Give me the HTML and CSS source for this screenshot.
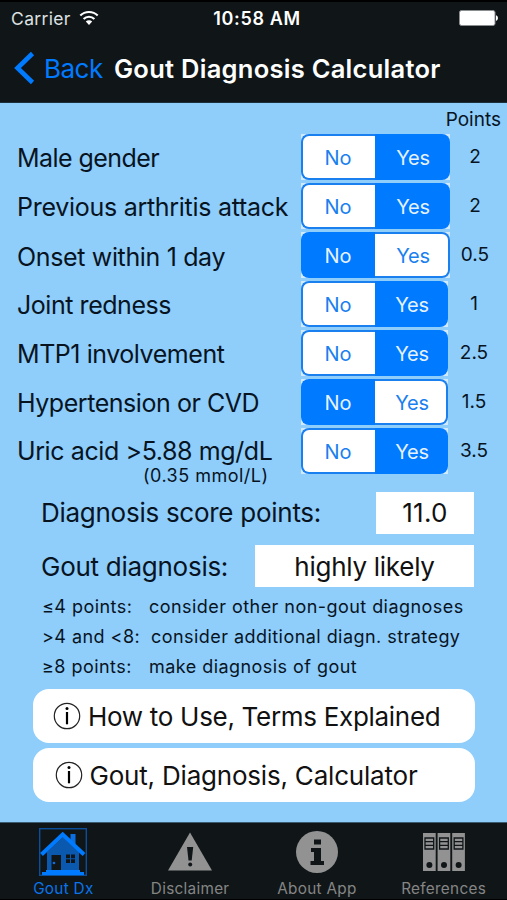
FILE: index.html
```html
<!DOCTYPE html>
<html lang="en">
<head>
    <meta charset="UTF-8">
    <meta name="viewport" content="width=device-width, initial-scale=1.0">
    <title>Gout Diagnosis Calculator</title>
    <link rel="stylesheet" href="styles.css">
</head>
<body>
<div class="app">
    <header class="header">
        <div class="status-bar">
            <div class="carrier">
                <span>Carrier</span>
                <svg class="wifi" viewBox="0 0 20 16" width="20" height="16">
                    <path d="M1.3 5.6a12.4 12.4 0 0 1 17.4 0" fill="none" stroke="#fff" stroke-width="2.1"/>
                    <path d="M4.6 9a7.7 7.7 0 0 1 10.8 0" fill="none" stroke="#fff" stroke-width="2.1"/>
                    <path d="M10 15l-3.2-3.4a4.6 4.6 0 0 1 6.4 0z" fill="#fff"/>
                </svg>
            </div>
            <span class="time">10:58 AM</span>
            <div class="battery-wrap">
                <svg viewBox="0 0 40 16" width="40" height="16">
                    <rect x="0.5" y="0.5" width="35.5" height="15" rx="2" fill="#fff" stroke="#8b8e90"/>
                    <path d="M37 5.2C39.6 6 39.6 10 37 10.8z" fill="#fff"/>
                </svg>
            </div>
        </div>
        <div class="nav-bar">
            <a class="back">
                <svg viewBox="0 0 21 34" width="21" height="34">
                    <path d="M18.5 2.5L3.5 17l15 14.5" fill="none" stroke="#007aff" stroke-width="4.6"/>
                </svg>
                <span>Back</span>
            </a>
            <h1>Gout Diagnosis Calculator</h1>
        </div>
    </header>

    <main class="content">
        <div class="points-title">Points</div>
        <div class="question wide">
            <span class="label male">Male gender</span>
            <div class="segment"><button>No</button><button class="on">Yes</button></div>
            <span class="points">2</span>
        </div>
        <div class="question wide">
            <span class="label previous">Previous arthritis attack</span>
            <div class="segment"><button>No</button><button class="on">Yes</button></div>
            <span class="points">2</span>
        </div>
        <div class="question wide">
            <span class="label onset">Onset within 1 day</span>
            <div class="segment"><button class="on">No</button><button>Yes</button></div>
            <span class="points">0.5</span>
        </div>
        <div class="question">
            <span class="label">Joint redness</span>
            <div class="segment"><button>No</button><button class="on">Yes</button></div>
            <span class="points">1</span>
        </div>
        <div class="question">
            <span class="label">MTP1 involvement</span>
            <div class="segment"><button>No</button><button class="on">Yes</button></div>
            <span class="points">2.5</span>
        </div>
        <div class="question">
            <span class="label">Hypertension or CVD</span>
            <div class="segment"><button class="on">No</button><button>Yes</button></div>
            <span class="points">1.5</span>
        </div>
        <div class="question">
            <span class="label uric">Uric acid &gt;5.88 mg/dL</span>
            <div class="segment"><button>No</button><button class="on">Yes</button></div>
            <span class="points">3.5</span>
        </div>
        <div class="unit-note">(0.35 mmol/L)</div>

        <div class="result score">
            <span class="result-label">Diagnosis score points:</span>
            <output>11.0</output>
        </div>
        <div class="result verdict">
            <span class="result-label">Gout diagnosis:</span>
            <output>highly likely</output>
        </div>

        <div class="legend">
            <p><span class="range">≤4 points:</span><span>consider other non-gout diagnoses</span></p>
            <p><span class="range between">&gt;4 and &lt;8:</span><span>consider additional diagn. strategy</span></p>
            <p><span class="range">≥8 points:</span><span>make diagnosis of gout</span></p>
        </div>

        <div class="links">
            <button class="link-button">
                <svg viewBox="0 0 28 28" width="28" height="28">
                    <circle cx="14" cy="14" r="12.7" fill="none" stroke="#222" stroke-width="1.2"/>
                    <path d="M14 10v12.3" stroke="#000" stroke-width="2.2"/>
                    <circle cx="14" cy="6.6" r="1.5"/>
                </svg>
                <span>How to Use, Terms Explained</span>
            </button>
            <button class="link-button about">
                <svg viewBox="0 0 28 28" width="28" height="28">
                    <circle cx="14" cy="14" r="12.7" fill="none" stroke="#222" stroke-width="1.2"/>
                    <path d="M14 10v12.3" stroke="#000" stroke-width="2.2"/>
                    <circle cx="14" cy="6.6" r="1.5"/>
                </svg>
                <span>Gout, Diagnosis, Calculator</span>
            </button>
        </div>
    </main>

    <nav class="tab-bar">
        <a class="tab active">
            <svg viewBox="0 0 48 48" width="48" height="48">
                <rect x="0.7" y="0.7" width="46.6" height="46.6" fill="none" stroke="#0b4f9a" stroke-width="1.4"/>
                <path d="M8 24L24 9l16 15v19H8z" fill="#0a59ae"/>
                <path d="M31.500 6h5v11l-5-4z" fill="#0a6fe0"/>
                <path d="M2.500 26.500L23.700 6.500 45 26.500" fill="none" stroke="#007aff" stroke-width="4"/>
                <rect x="12.5" y="27" width="9.5" height="15" fill="#101618"/>
                <circle cx="15" cy="35" r="1.3" fill="#0a6fe0"/>
                <path d="M27 26.500h4v3.800h-4zM32 26.500h4v3.800h-4zM27 31.300h4v3.800h-4zM32 31.300h4v3.800h-4z" fill="#101618"/>
                <path d="M7 42h34v2h4v3H3v-3h4z" fill="#007aff"/>
            </svg>
            <span>Gout Dx</span>
        </a>
        <a class="tab">
            <svg viewBox="0 0 48 48" width="48" height="48">
                <path d="M24 4.5L46 42.500H2z" fill="#929292"/>
                <path d="M21 19h6.200l-1.500 13.500h-3.200z" fill="#101618"/>
                <circle cx="24.2" cy="36.5" r="2" fill="#101618"/>
            </svg>
            <span>Disclaimer</span>
        </a>
        <a class="tab">
            <svg viewBox="0 0 48 48" width="48" height="48">
                <circle cx="24" cy="24" r="21" fill="#929292"/>
                <path d="M21 11.500h7v5h-7zM18 20h10v13h3v4H17.500v-4h3.500v-9h-3z" fill="#101618"/>
            </svg>
            <span>About App</span>
        </a>
        <a class="tab">
            <svg viewBox="0 0 48 48" width="48" height="48">
                <path d="M3 5h12.700v38H3zM17.600 5h12.700v38H17.600zM32.200 5h12.700v38H32.200z" fill="#929292"/>
                <g fill="none" stroke="#101618" stroke-width="1.3">
                    <path d="M5 10h8.700v11H5zM5 13.600h8.700M5 17.300h8.700"/>
                    <path d="M19.600 10h8.700v11h-8.700zM19.600 13.600h8.700M19.600 17.300h8.700"/>
                    <path d="M34.200 10h8.700v11h-8.700zM34.200 13.600h8.700M34.200 17.300h8.700"/>
                </g>
                <g fill="#101618">
                    <circle cx="9.4" cy="37" r="3"/>
                    <circle cx="24" cy="37" r="3"/>
                    <circle cx="38.6" cy="37" r="3"/>
                </g>
            </svg>
            <span>References</span>
        </a>
    </nav>
</div>
</body>
</html>
```
FILE: styles.css
```css
* {
    box-sizing: border-box;
}

body {
    margin: 0;
    font-family: Inter, "Liberation Sans", sans-serif;
    color: #07141f;
    background-color: #8fcdfb;
}

button {
    padding: 0;
    border: none;
    font-family: inherit;
}

span {
    white-space: nowrap;
}

.app {
    display: flex;
    flex-direction: column;
    width: 507px;
    height: 900px;
    overflow: hidden;
}

.header {
    height: 103px;
    color: #fff;
    background-color: #101618;
    border-top: 2px solid #000;
    border-bottom: 1px solid #1c2f3d;
}

.status-bar {
    display: grid;
    grid-template-columns: 1fr auto 1fr;
    align-items: center;
    height: 32px;
    padding: 0 8px 0 11px;
    font-size: 17.5px;
}

.carrier {
    display: flex;
    align-items: center;
    gap: 8px;
    letter-spacing: 0.35px;
    color: #dfe1e2;
}

.time {
    padding-left: 4px;
    font-size: 18px;
    font-weight: 600;
    letter-spacing: 0.65px;
}

.battery-wrap {
    display: flex;
    justify-content: flex-end;
}

.nav-bar {
    display: flex;
    align-items: center;
    height: 68px;
    padding-left: 14px;
}

.back {
    display: flex;
    align-items: center;
    width: 100px;
    gap: 9px;
    font-size: 26px;
    letter-spacing: -0.5px;
    color: #007aff;
}

.nav-bar h1 {
    margin: 0;
    font-size: 25.5px;
    font-weight: 600;
    letter-spacing: 0.27px;
    white-space: nowrap;
}

.content {
    flex: 1;
}

.points-title {
    height: 31px;
    padding: 5px 6px 0 0;
    font-size: 19px;
    line-height: 24px;
    text-align: right;
}

.question {
    display: grid;
    grid-template-columns: 284px 147px 52px;
    align-items: center;
    height: 49px;
    padding: 0 0 3px 17px;
}

.question.wide {
    grid-template-columns: 284px 149px 50px;
}

.label {
    padding-top: 2px;
    font-size: 25px;
    letter-spacing: -0.45px;
}

.label.male {
    letter-spacing: -0.55px;
}

.label.previous {
    letter-spacing: -0.28px;
}

.label.onset {
    padding-top: 4px;
    letter-spacing: -0.35px;
}

.label.uric {
    padding-top: 0;
    letter-spacing: -0.4px;
}

.segment {
    display: flex;
    height: 46px;
    background-color: #d2eafd;
}

.segment button {
    width: 74px;
    padding: 1px 2px 0 0;
    border: 2px solid #1a80f0;
    border-right: none;
    border-radius: 8px 0 0 8px;
    font-size: 20px;
    color: #1a80f0;
    background-color: #fff;
}

.segment button + button {
    flex: 1;
    padding: 1px 0 0 3px;
    border: 2px solid #1a80f0;
    border-left: none;
    border-radius: 0 8px 8px 0;
    letter-spacing: -0.3px;
}

.segment button.on {
    color: #e6f2ff;
    border-color: #007aff;
    background-color: #007aff;
}

.points {
    padding-bottom: 2px;
    font-size: 19px;
    text-align: center;
}

.unit-note {
    height: 25.5px;
    margin: -12px 0 1px 143px;
    font-size: 18px;
    line-height: 22px;
    letter-spacing: 0.48px;
}

.result {
    display: flex;
    align-items: center;
    justify-content: space-between;
    height: 42px;
    margin: 0 33px 11.5px 41px;
    font-size: 26px;
    letter-spacing: -0.27px;
}

.result output {
    display: flex;
    align-items: center;
    justify-content: center;
    height: 42px;
    color: #111;
    background-color: #fff;
}

.score output {
    width: 98px;
    letter-spacing: 0.3px;
}

.verdict {
    margin-bottom: 5px;
}

.verdict output {
    width: 219px;
}

.legend {
    padding-left: 42px;
    font-size: 18px;
    letter-spacing: 0.45px;
}

.legend p {
    display: flex;
    height: 30px;
    margin: 0;
    line-height: 30px;
}

.range {
    width: 107px;
}

.range.between {
    width: 109px;
}

.links {
    display: flex;
    flex-direction: column;
    gap: 5px;
    margin: 7px 32px 0 33px;
}

.link-button {
    display: flex;
    align-items: center;
    gap: 7px;
    height: 54px;
    padding-left: 20px;
    border-radius: 16px;
    font-size: 26px;
    letter-spacing: -0.3px;
    color: #111;
    background-color: #fff;
}

.link-button.about {
    padding-left: 21.5px;
    letter-spacing: -0.2px;
}

.tab-bar {
    display: flex;
    height: 78px;
    border-top: 1px solid #3c5a70;
    border-bottom: 1px solid #000;
    background-color: #101618;
}

.tab {
    display: flex;
    flex: 1;
    flex-direction: column;
    align-items: center;
    gap: 3px;
    padding-top: 5px;
    font-size: 15.3px;
    letter-spacing: 0.3px;
    color: #858585;
}

.tab.active {
    color: #0a74ea;
}
```
